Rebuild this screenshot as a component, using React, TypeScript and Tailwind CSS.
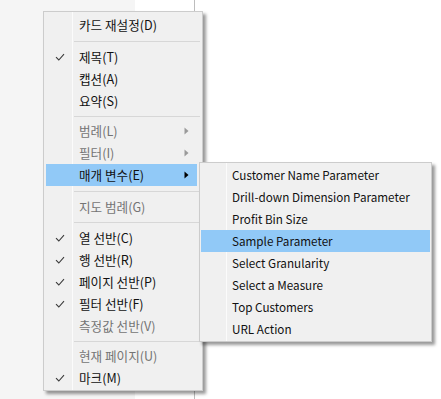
import React from "react";

type Item =
  | { sep: true; h: number }
  | {
      sep?: false;
      label: string;
      checked?: boolean;
      disabled?: boolean;
      arrow?: boolean;
      active?: boolean;
    };

const mainItems: Item[] = [
  { label: "카드 재설정(D)" },
  { sep: true, h: 10 },
  { label: "제목(T)", checked: true },
  { label: "캡션(A)" },
  { label: "요약(S)" },
  { sep: true, h: 8 },
  { label: "범례(L)", disabled: true, arrow: true },
  { label: "필터(I)", disabled: true, arrow: true },
  { label: "매개 변수(E)", arrow: true, active: true },
  { sep: true, h: 10 },
  { label: "지도 범례(G)", disabled: true },
  { sep: true, h: 9 },
  { label: "열 선반(C)", checked: true },
  { label: "행 선반(R)", checked: true },
  { label: "페이지 선반(P)", checked: true },
  { label: "필터 선반(F)", checked: true },
  { label: "측정값 선반(V)", disabled: true },
  { sep: true, h: 8 },
  { label: "현재 페이지(U)", disabled: true },
  { label: "마크(M)", checked: true },
];

const subItems = [
  "Customer Name Parameter",
  "Drill-down Dimension Parameter",
  "Profit Bin Size",
  "Sample Parameter",
  "Select Granularity",
  "Select a Measure",
  "Top Customers",
  "URL Action",
];

const font = {
  fontFamily: '"Noto Sans CJK KR", "Noto Sans", sans-serif',
};

function Check() {
  return (
    <svg width="10" height="8" viewBox="0 0 10 8" className="absolute left-[9px] top-1/2 -translate-y-1/2">
      <path d="M1 4.2 L3.8 7 L9 1.2" fill="none" stroke="#3a3a3a" strokeWidth="1.1" />
    </svg>
  );
}

function Arrow({ disabled }: { disabled?: boolean }) {
  return (
    <svg width="5" height="8" viewBox="0 0 5 8" className="absolute right-[8px] top-1/2 -translate-y-1/2">
      <path d="M0.5 0.5 L4.5 4 L0.5 7.5 Z" fill={disabled ? "#9a9a9a" : "#000"} />
    </svg>
  );
}

export default function App() {
  return (
    <div className="relative w-[441px] h-[399px] overflow-hidden bg-white flex" style={font}>
      <div className="w-[135px] h-full bg-[#f5f5f5]" />
      <div className="w-[60px] h-full bg-white border-r border-[#bdbdbd]" />
      <div className="flex-1 h-full bg-white" />

      {/* main menu */}
      <div className="absolute left-[43px] top-[11px] w-[160px] border border-[#cccccc] bg-[#f0f0f0] pt-[2px] pb-[1px] shadow-[3px_3px_3px_rgba(0,0,0,0.4)]">
        <div className="absolute left-[28px] top-0 bottom-0 w-px bg-[#fbfbfb]" />
        <div className="relative flex flex-col">
          {mainItems.map((it, i) =>
            it.sep ? (
              <div key={i} className="flex items-center" style={{ height: it.h }}>
                <div className="ml-[30px] mr-[2px] h-px flex-1 bg-[#d7d7d7]" />
              </div>
            ) : (
              <div
                key={i}
                className={
                  "relative h-[22px] ml-[2px] mr-[5px] flex items-center pl-[33px] text-[12.6px] leading-none " +
                  (it.active ? "bg-[#91c9f7] " : "") +
                  (it.disabled ? "text-[#747474]" : "text-[#111]")
                }
              >
                {it.checked && <Check />}
                <span className="whitespace-nowrap">{it.label}</span>
                {it.arrow && <Arrow disabled={it.disabled} />}
              </div>
            )
          )}
        </div>
      </div>

      {/* submenu */}
      <div className="absolute left-[199px] top-[162px] w-[233px] border border-[#cccccc] bg-[#f0f0f0] pt-[1px] pb-[1px] shadow-[3px_3px_3px_rgba(0,0,0,0.4)]">
        <div className="absolute left-[26px] top-0 bottom-0 w-px bg-[#fbfbfb]" />
        <div className="relative flex flex-col">
          {subItems.map((s) => (
            <div
              key={s}
              className={
                "h-[22px] mx-px flex items-center pl-[31px] text-[11.7px] leading-none text-[#111] " +
                (s === "Sample Parameter" ? "bg-[#91c9f7]" : "")
              }
            >
              <span className="whitespace-nowrap">{s}</span>
            </div>
          ))}
        </div>
      </div>
    </div>
  );
}
